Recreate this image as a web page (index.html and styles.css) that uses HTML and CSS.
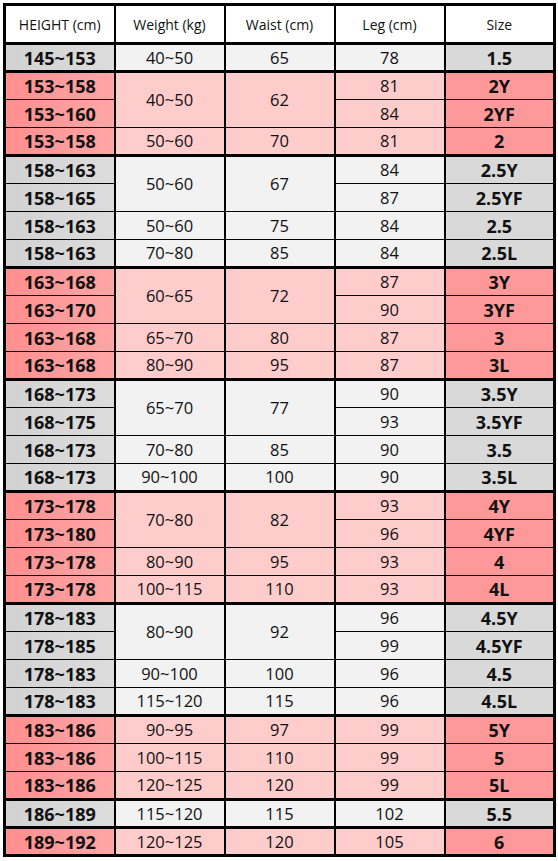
FILE: index.html
```html
<!DOCTYPE html>
<html>
<head>
<meta charset="utf-8">
<link rel="stylesheet" href="styles.css">
</head>
<body>
<table class="size-table">
<colgroup><col class="c"><col class="c"><col class="c"><col class="c"><col class="c"></colgroup>
<thead>
<tr><th>HEIGHT (cm)</th><th>Weight (kg)</th><th>Waist (cm)</th><th>Leg (cm)</th><th>Size</th></tr>
</thead>
<tbody>
<tr class="g gray"><td class="h">145~153</td><td>40~50</td><td>65</td><td>78</td><td class="s">1.5</td></tr>

<tr class="g pink"><td class="h">153~158</td><td rowspan="2">40~50</td><td rowspan="2">62</td><td>81</td><td class="s">2Y</td></tr>
<tr class="pink"><td class="h">153~160</td><td>84</td><td class="s">2YF</td></tr>
<tr class="pink"><td class="h">153~158</td><td>50~60</td><td>70</td><td>81</td><td class="s">2</td></tr>

<tr class="g gray"><td class="h">158~163</td><td rowspan="2">50~60</td><td rowspan="2">67</td><td>84</td><td class="s">2.5Y</td></tr>
<tr class="gray"><td class="h">158~165</td><td>87</td><td class="s">2.5YF</td></tr>
<tr class="gray"><td class="h">158~163</td><td>50~60</td><td>75</td><td>84</td><td class="s">2.5</td></tr>
<tr class="gray"><td class="h">158~163</td><td>70~80</td><td>85</td><td>84</td><td class="s">2.5L</td></tr>

<tr class="g pink"><td class="h">163~168</td><td rowspan="2">60~65</td><td rowspan="2">72</td><td>87</td><td class="s">3Y</td></tr>
<tr class="pink"><td class="h">163~170</td><td>90</td><td class="s">3YF</td></tr>
<tr class="pink"><td class="h">163~168</td><td>65~70</td><td>80</td><td>87</td><td class="s">3</td></tr>
<tr class="pink"><td class="h">163~168</td><td>80~90</td><td>95</td><td>87</td><td class="s">3L</td></tr>

<tr class="g gray"><td class="h">168~173</td><td rowspan="2">65~70</td><td rowspan="2">77</td><td>90</td><td class="s">3.5Y</td></tr>
<tr class="gray"><td class="h">168~175</td><td>93</td><td class="s">3.5YF</td></tr>
<tr class="gray"><td class="h">168~173</td><td>70~80</td><td>85</td><td>90</td><td class="s">3.5</td></tr>
<tr class="gray"><td class="h">168~173</td><td>90~100</td><td>100</td><td>90</td><td class="s">3.5L</td></tr>

<tr class="g pink"><td class="h">173~178</td><td rowspan="2">70~80</td><td rowspan="2">82</td><td>93</td><td class="s">4Y</td></tr>
<tr class="pink"><td class="h">173~180</td><td>96</td><td class="s">4YF</td></tr>
<tr class="pink"><td class="h">173~178</td><td>80~90</td><td>95</td><td>93</td><td class="s">4</td></tr>
<tr class="pink"><td class="h">173~178</td><td>100~115</td><td>110</td><td>93</td><td class="s">4L</td></tr>

<tr class="g gray"><td class="h">178~183</td><td rowspan="2">80~90</td><td rowspan="2">92</td><td>96</td><td class="s">4.5Y</td></tr>
<tr class="gray"><td class="h">178~185</td><td>99</td><td class="s">4.5YF</td></tr>
<tr class="gray"><td class="h">178~183</td><td>90~100</td><td>100</td><td>96</td><td class="s">4.5</td></tr>
<tr class="gray"><td class="h">178~183</td><td>115~120</td><td>115</td><td>96</td><td class="s">4.5L</td></tr>

<tr class="g pink"><td class="h">183~186</td><td>90~95</td><td>97</td><td>99</td><td class="s">5Y</td></tr>
<tr class="pink"><td class="h">183~186</td><td>100~115</td><td>110</td><td>99</td><td class="s">5</td></tr>
<tr class="pink"><td class="h">183~186</td><td>120~125</td><td>120</td><td>99</td><td class="s">5L</td></tr>

<tr class="g gray"><td class="h">186~189</td><td>115~120</td><td>115</td><td>102</td><td class="s">5.5</td></tr>

<tr class="g pink"><td class="h">189~192</td><td>120~125</td><td>120</td><td>105</td><td class="s">6</td></tr>
</tbody>
</table>
</body>
</html>
```

FILE: styles.css
```css
html, body {
  margin: 0;
  padding: 0;
  background: #ffffff;
}

body {
  padding: 3px 0 0 3px;
  font-family: "Open Sans", "Noto Sans", sans-serif;
  color: #111111;
}

.size-table {
  border-collapse: collapse;
  table-layout: fixed;
  width: 553px;
  border: 3px solid #000;
}

.size-table .c {
  width: 20%;
}

.size-table th,
.size-table td {
  box-sizing: border-box;
}

.size-table th {
  height: 39px;
  padding: 0;
  font-weight: 400;
  font-size: 14px;
  text-align: center;
  vertical-align: middle;
  background: #ffffff;
  border-left: 2px solid #000;
  border-right: 2px solid #000;
  border-bottom: 3px solid #000;
}

.size-table td {
  height: 28px;
  padding: 0;
  font-size: 16.5px;
  line-height: 20px;
  text-align: center;
  vertical-align: middle;
  border-top: 1px solid #000;
  border-bottom: 1px solid #000;
  border-left: 2px solid #000;
  border-right: 2px solid #000;
}

.size-table tr.g td {
  border-top: 3px solid #000;
}

.size-table td.h,
.size-table td.s {
  font-weight: 700;
  font-size: 18px;
}

.gray td { background: #f2f2f2; }
.gray td.h { background: linear-gradient(to right, #d2d2d2, #dcdcdc); }
.gray td.s { background: #d9d9d9; }

.pink td { background: #ffcccc; }
.pink td.h { background: linear-gradient(to right, #ff8f8f, #ffa6a6); }
.pink td.s { background: #ff9999; }
```
